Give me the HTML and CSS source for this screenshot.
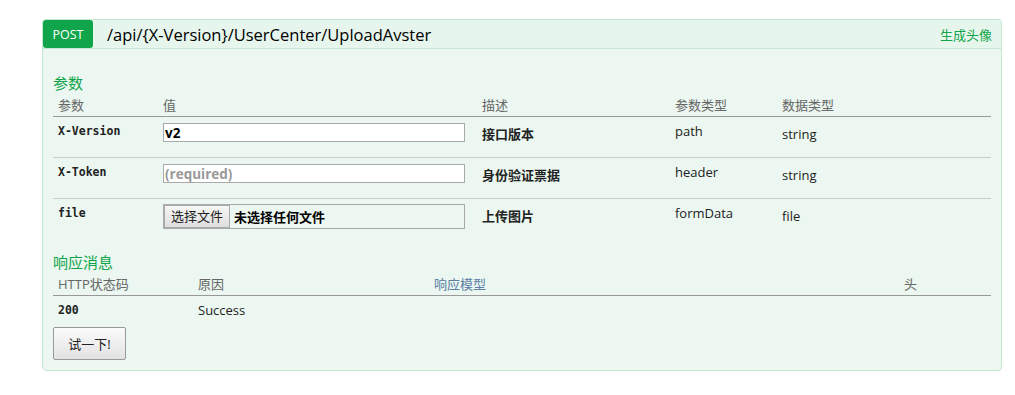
FILE: index.html
```html
<!DOCTYPE html>
<html>
<head>
<meta charset="UTF-8">
<title>UploadAvster</title>
<link rel="stylesheet" href="styles.css">
</head>
<body>
<div class="op">
  <div class="op-head">
    <span class="verb">POST</span>
    <span class="path">/api/{X-Version}/UserCenter/UploadAvster</span>
    <span class="summary">生成头像</span>
  </div>
  <div class="op-body">
    <h4>参数</h4>
    <table class="params">
      <colgroup>
        <col class="c1"><col class="c2"><col class="c3"><col class="c4"><col class="c5">
      </colgroup>
      <thead>
        <tr><th>参数</th><th>值</th><th>描述</th><th>参数类型</th><th>数据类型</th></tr>
      </thead>
      <tbody>
        <tr>
          <td class="code">X-Version</td>
          <td><input type="text" class="field" value="v2"></td>
          <td class="desc">接口版本</td>
          <td>path</td>
          <td class="dtype">string</td>
        </tr>
        <tr>
          <td class="code">X-Token</td>
          <td><input type="text" class="field" placeholder="(required)"></td>
          <td class="desc">身份验证票据</td>
          <td>header</td>
          <td class="dtype">string</td>
        </tr>
        <tr>
          <td class="code">file</td>
          <td>
            <div class="file">
              <span class="file-btn">选择文件</span>
              <span class="file-name">未选择任何文件</span>
            </div>
          </td>
          <td class="desc">上传图片</td>
          <td>formData</td>
          <td class="dtype">file</td>
        </tr>
      </tbody>
    </table>

    <h4 class="resp-title">响应消息</h4>
    <table class="resp">
      <colgroup>
        <col class="r1"><col class="r2"><col class="r3"><col class="r4">
      </colgroup>
      <thead>
        <tr><th>HTTP状态码</th><th>原因</th><th class="model">响应模型</th><th>头</th></tr>
      </thead>
      <tbody>
        <tr><td class="code">200</td><td>Success</td><td></td><td></td></tr>
      </tbody>
    </table>

    <button class="try">试一下!</button>
  </div>
</div>
</body>
</html>
```

FILE: styles.css
```css
body {
  margin: 0;
  background: #ffffff;
  font-family: "Open Sans", "Noto Sans CJK SC", sans-serif;
  color: #222;
}
.op {
  margin: 19px 0 0 42px;
  width: 958px;
  border: 1px solid #c3e8d1;
  border-radius: 4px;
  background: #ebf7f0;
}
.op-head {
  display: flex;
  align-items: center;
  height: 28px;
  background: #e7f6ec;
  border-bottom: 1px solid #c3e8d1;
  border-radius: 4px 4px 0 0;
}
.verb {
  width: 50px;
  height: 28px;
  line-height: 29px;
  text-align: center;
  background: #10a54a;
  color: #fff;
  font-size: 12.5px;
  border-radius: 3px;
}
.path {
  margin-left: 14px;
  font-size: 16.5px;
  color: #000;
}
.summary {
  margin-left: auto;
  margin-right: 9px;
  color: #10a54a;
  font-size: 13px;
}
.op-body {
  padding: 25px 10px 10px;
}
h4 {
  margin: 0 0 3px;
  font-size: 15px;
  font-weight: normal;
  color: #10a54a;
  line-height: 18px;
}
.resp-title {
  margin-top: 13px;
}
table {
  width: 938px;
  border-collapse: collapse;
  table-layout: fixed;
  font-size: 13px;
}
th {
  text-align: left;
  font-weight: normal;
  color: #666;
  padding: 0 5px 2px;
  height: 18px;
  border-bottom: 1px solid #999;
}
.c1 { width: 105px; }
.c2 { width: 319px; }
.c3 { width: 193px; }
.c4 { width: 107px; }
.c5 { width: 214px; }
.r1 { width: 140px; }
.r2 { width: 236px; }
.r3 { width: 470px; }
.r4 { width: 92px; }
.params tbody tr {
  height: 41px;
}
.params td {
  vertical-align: top;
  padding: 5px 5px 0;
  border-bottom: 1px solid #ccc;
  color: #222;
}
.params tr:last-child td {
  border-bottom: none;
}
.code {
  font-family: "DejaVu Sans Mono", monospace;
  font-size: 11.5px;
  font-weight: bold;
  padding-top: 7px !important;
}
.desc {
  font-weight: bold;
  padding-top: 7px !important;
}
.dtype {
  padding-top: 8px !important;
}
.field {
  box-sizing: border-box;
  width: 302px;
  height: 19px;
  margin: 1px 0 0;
  padding: 0 1px;
  border: 1px solid #aaa;
  font-family: "Open Sans", "Noto Sans CJK SC", sans-serif;
  font-size: 13.5px;
  font-weight: bold;
  color: #000;
  background: #fff;
}
.field::placeholder {
  color: #999;
}
.file {
  box-sizing: border-box;
  display: flex;
  align-items: center;
  width: 302px;
  height: 25px;
  border: 1px solid #aaa;
  font-size: 13px;
}
.file-btn {
  height: 21px;
  line-height: 21px;
  padding: 0 6px;
  border: 1px solid #aaa;
  background: linear-gradient(#f6f6f6, #dedede);
  color: #222;
}
.file-name {
  margin-left: 4px;
  font-weight: bold;
  color: #000;
}
.resp tbody tr {
  height: 32px;
}
.resp td {
  padding: 5px 5px 0;
  vertical-align: top;
}
.resp .code {
  padding-top: 7px !important;
}
.model {
  color: #5d7fa6;
}
.try {
  display: block;
  width: 73px;
  height: 33px;
  border: 1px solid #999;
  border-radius: 2px;
  background: linear-gradient(#fbfbfb, #e2e2e2);
  font-family: "Open Sans", "Noto Sans CJK SC", sans-serif;
  font-size: 13px;
  color: #222;
  cursor: pointer;
}
```
